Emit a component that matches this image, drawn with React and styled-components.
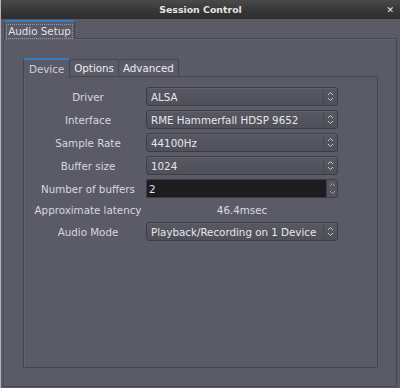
import styled, { createGlobalStyle } from "styled-components";

const GlobalStyle = createGlobalStyle`
  html, body {
    margin: 0;
    padding: 0;
    background: #5b5b67;
  }
  body {
    font-family: "DejaVu Sans", "Liberation Sans", sans-serif;
    font-size: 10.3px;
    color: #dcdce0;
  }
`;

const rows = [
  { label: "Driver", value: "ALSA" },
  { label: "Interface", value: "RME Hammerfall HDSP 9652" },
  { label: "Sample Rate", value: "44100Hz" },
  { label: "Buffer size", value: "1024" },
];

function UpDownIcon() {
  return (
    <svg width="7" height="11" viewBox="0 0 7 11">
      <path d="M1 4 L3.5 1.5 L6 4" fill="none" stroke="#c8c8d0" strokeWidth="1" />
      <path d="M1 7 L3.5 9.5 L6 7" fill="none" stroke="#c8c8d0" strokeWidth="1" />
    </svg>
  );
}

function Arrow({ up }) {
  return (
    <svg width="7" height="5" viewBox="0 0 7 5">
      <path
        d={up ? "M1 4 L3.5 1.5 L6 4" : "M1 1 L3.5 3.5 L6 1"}
        fill="none"
        stroke="#9c9ca6"
        strokeWidth="1"
      />
    </svg>
  );
}

function Combo({ value }) {
  return (
    <ComboBox>
      <ComboText>{value}</ComboText>
      <ComboArrow>
        <UpDownIcon />
      </ComboArrow>
    </ComboBox>
  );
}

export default function App() {
  return (
    <>
      <GlobalStyle />
      <Window>
        <TitleBar>
          <span />
          <Title>Session Control</Title>
          <Close>✕</Close>
        </TitleBar>
        <Body>
          <TabBar>
            <OuterTab>
              <FocusText>Audio Setup</FocusText>
            </OuterTab>
          </TabBar>
          <OuterPane>
            <InnerTabBar>
              <InnerTab $active>Device</InnerTab>
              <InnerTab>Options</InnerTab>
              <InnerTab>Advanced</InnerTab>
              <TabFill />
            </InnerTabBar>
            <InnerPane>
              <Form>
                {rows.map((r) => (
                  <Row key={r.label}>
                    <Label>{r.label}</Label>
                    <Combo value={r.value} />
                  </Row>
                ))}
                <Row>
                  <Label>Number of buffers</Label>
                  <SpinBox>
                    <SpinInput>2</SpinInput>
                    <SpinButtons>
                      <SpinBtn>
                        <Arrow up />
                      </SpinBtn>
                      <SpinBtn>
                        <Arrow />
                      </SpinBtn>
                    </SpinButtons>
                  </SpinBox>
                </Row>
                <Row $h={16}>
                  <Label>Approximate latency</Label>
                  <Latency>46.4msec</Latency>
                </Row>
                <Row>
                  <Label>Audio Mode</Label>
                  <Combo value="Playback/Recording on 1 Device" />
                </Row>
              </Form>
            </InnerPane>
          </OuterPane>
        </Body>
      </Window>
    </>
  );
}

const Window = styled.div`
  width: 400px;
  height: 388px;
  box-sizing: border-box;
  display: flex;
  flex-direction: column;
  background: #5b5b67;
  border-left: 1px solid #b4b4bc;
  overflow: hidden;
`;

const TitleBar = styled.div`
  height: 19px;
  flex: none;
  display: grid;
  grid-template-columns: 1fr auto 1fr;
  align-items: center;
  background: linear-gradient(#4a4a4a, #363636 60%, #2e2e2e);
  color: #e4e4e4;
`;

const Title = styled.div`
  font-weight: bold;
  font-size: 9.4px;
`;

const Close = styled.div`
  justify-self: end;
  margin-right: 6px;
  font-size: 9px;
  font-weight: bold;
  color: #e8e8e8;
`;

const Body = styled.div`
  flex: 1;
  display: flex;
  flex-direction: column;
  padding: 1px 3px 1px 2px;
`;

const TabBar = styled.div`
  display: flex;
  height: 19px;
  padding-left: 1px;
  position: relative;
  z-index: 1;
`;

const OuterTab = styled.div`
  width: 71px;
  box-sizing: border-box;
  border: 1px solid #45454f;
  border-top: 2px solid #2f7fc4;
  border-bottom: none;
  border-radius: 2px 2px 0 0;
  background: #5b5b67;
  display: flex;
  align-items: center;
  justify-content: center;
  padding-top: 1px;
`;

const FocusText = styled.span`
  border: 1px dotted #9a9aa6;
  padding: 0 1px;
  line-height: 13px;
  color: #e2e2e6;
`;

const OuterPane = styled.div`
  flex: 1;
  margin-top: -1px;
  border: 1px solid #474751;
  border-radius: 2px;
  box-shadow: inset 1px 1px 0 #626270;
  padding: 19px 18px 18px 19px;
  display: flex;
  flex-direction: column;
`;

const InnerTabBar = styled.div`
  display: flex;
  align-items: flex-end;
  height: 19px;
  position: relative;
  z-index: 1;
`;

const InnerTab = styled.div`
  box-sizing: border-box;
  height: ${(p) => (p.$active ? 20 : 18)}px;
  margin-bottom: ${(p) => (p.$active ? -1 : 0)}px;
  padding: 0 ${(p) => (p.$active ? 5 : 4)}px;
  border: 1px solid #45454f;
  border-top: ${(p) => (p.$active ? "2px solid #2f7fc4" : "1px solid #45454f")};
  border-bottom: ${(p) => (p.$active ? "none" : "1px solid #45454f")};
  border-left: ${(p) => (p.$active ? "1px solid #45454f" : "none")};
  border-radius: 2px 2px 0 0;
  background: #5b5b67;
  display: flex;
  align-items: center;
  color: ${(p) => (p.$active ? "#cfcfd6" : "#ececf0")};
`;

const TabFill = styled.div`
  flex: 1;
  border-bottom: 1px solid #45454f;
`;

const InnerPane = styled.div`
  flex: 1;
  border: 1px solid #45454f;
  border-top: none;
  border-radius: 0 0 2px 2px;
  box-shadow: inset 1px 0 0 #626270;
  padding: 10px 0 0 6px;
`;

const Form = styled.div`
  display: flex;
  flex-direction: column;
  gap: 4px;
`;

const Row = styled.div`
  display: grid;
  grid-template-columns: 116px 192px;
  align-items: center;
  height: ${(p) => p.$h || 19}px;
`;

const Label = styled.div`
  text-align: center;
  color: #d8d8dc;
  white-space: nowrap;
`;

const ComboBox = styled.div`
  height: 19px;
  box-sizing: border-box;
  border: 1px solid #3d3d46;
  border-radius: 3px;
  background: linear-gradient(#585863, #50505b);
  box-shadow: inset 0 1px 0 #62626e;
  display: flex;
  align-items: center;
`;

const ComboText = styled.div`
  flex: 1;
  padding-left: 4px;
  color: #e6e6ea;
  white-space: nowrap;
`;

const ComboArrow = styled.div`
  width: 13px;
  height: 14px;
  border-left: 1px solid #474751;
  display: flex;
  align-items: center;
  justify-content: center;
`;

const SpinBox = styled.div`
  height: 19px;
  display: flex;
`;

const SpinInput = styled.div`
  flex: 1;
  background: #1d1d21;
  border: 1px solid #3a3a42;
  border-right: none;
  border-radius: 2px 0 0 2px;
  color: #e8e8ec;
  padding-left: 2px;
  display: flex;
  align-items: center;
`;

const SpinButtons = styled.div`
  width: 10px;
  display: flex;
  flex-direction: column;
  border: 1px solid #3d3d46;
  border-radius: 0 3px 3px 0;
  background: #55555f;
`;

const SpinBtn = styled.div`
  flex: 1;
  display: flex;
  align-items: center;
  justify-content: center;
`;

const Latency = styled.div`
  text-align: center;
  color: #dcdce0;
`;
